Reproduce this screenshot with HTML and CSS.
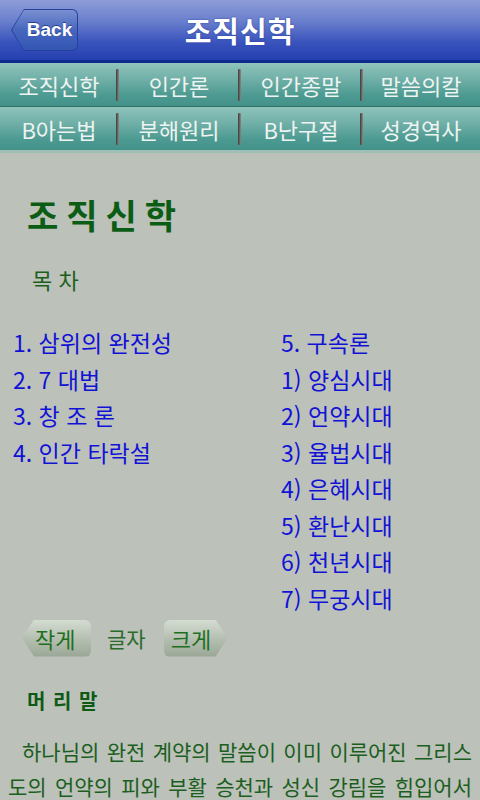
FILE: index.html
```html
<!DOCTYPE html>
<html lang="ko">
<head>
<meta charset="utf-8">
<link rel="stylesheet" href="styles.css">
</head>
<body>
<div class="header">
  <div class="back"><span>Back</span></div>
  <div class="htitle">조직신학</div>
</div>
<div class="tabs">
  <div class="tabrow">
    <div class="tab">조직신학</div>
    <div class="tab">인간론</div>
    <div class="tab">인간종말</div>
    <div class="tab">말씀의칼</div>
  </div>
  <div class="tabrow">
    <div class="tab">B아는법</div>
    <div class="tab">분해원리</div>
    <div class="tab">B난구절</div>
    <div class="tab">성경역사</div>
  </div>
</div>
<div class="content">
  <h1 class="title">조직신학</h1>
  <div class="toc-label">목 차</div>
  <div class="toc">
    <ul class="col left">
      <li>1. 삼위의 완전성</li>
      <li>2. 7 대법</li>
      <li>3. 창 조 론</li>
      <li>4. 인간 타락설</li>
    </ul>
    <ul class="col right">
      <li>5. 구속론</li>
      <li>1) 양심시대</li>
      <li>2) 언약시대</li>
      <li>3) 율법시대</li>
      <li>4) 은혜시대</li>
      <li>5) 환난시대</li>
      <li>6) 천년시대</li>
      <li>7) 무궁시대</li>
    </ul>
  </div>
  <div class="fontsize">
    <div class="fbtn small">작게</div>
    <div class="flabel">글자</div>
    <div class="fbtn big">크게</div>
  </div>
  <div class="section">머 리 말</div>
  <p class="para"><span class="l1">하나님의 완전 계약의 말씀이 이미 이루어진 그리스</span><span class="l2">도의 언약의 피와 부활 승천과 성신 강림을 힘입어서</span></p>
</div>
</body>
</html>
```
FILE: styles.css
```css
html, body {
  margin: 0;
  padding: 0;
}
body {
  width: 480px;
  height: 800px;
  overflow: hidden;
  background: #bcc1b9;
  font-family: "Noto Sans CJK KR", "Noto Sans", sans-serif;
}
.header {
  height: 60px;
  border-bottom: 3px solid #0d2a8c;
  background: linear-gradient(#8e9dd8 0%, #6a7fcd 35%, #3a54bd 70%, #2540b0 100%);
  display: flex;
  align-items: center;
  justify-content: center;
  position: relative;
}
.back {
  position: absolute;
  left: 11px;
  top: 9px;
  width: 67px;
  height: 42px;
  background: #24409a;
  clip-path: polygon(0 50%, 13px 0, 100% 0, 100% 100%, 13px 100%);
  border-radius: 0 6px 6px 0;
}
.back span {
  position: absolute;
  left: 1px;
  top: 1px;
  right: 1px;
  bottom: 1px;
  display: flex;
  align-items: center;
  justify-content: center;
  padding-left: 10px;
  box-sizing: border-box;
  background: linear-gradient(#7b90d2, #4766bd 50%, #3356b4);
  clip-path: polygon(0 50%, 12px 0, 100% 0, 100% 100%, 12px 100%);
  border-radius: 0 5px 5px 0;
  color: #fff;
  font-family: "Liberation Sans", Arial, sans-serif;
  font-weight: bold;
  font-size: 19px;
  text-shadow: 0 -1px 0 #26418f;
}
.htitle {
  color: #fff;
  font-weight: bold;
  font-size: 29px;
  letter-spacing: 1px;
  text-shadow: 0 0 2px #2a3f9a;
  line-height: 60px;
}
.tabs {
  background: #2f7a72;
}
.tabrow {
  display: grid;
  grid-template-columns: 118px 122px 122px 118px;
  height: 43px;
  border-bottom: 1px solid #2e6f68;
  background: linear-gradient(#8fc4bc 0%, #6eaea6 40%, #4c9a91 75%, #43928a 100%);
}
.tabrow + .tabrow {
  border-bottom: 3px solid #9fbfb6;
}
.tab {
  display: flex;
  align-items: center;
  justify-content: center;
  color: #eef4f2;
  font-size: 22px;
  position: relative;
}
.tab + .tab::before {
  content: "";
  position: absolute;
  left: -2px;
  top: 6px;
  width: 3px;
  height: 32px;
  background: linear-gradient(90deg, #3c3a38, #8d8a86);
  border-radius: 1px;
}
.title {
  margin: 41px 0 0 27px;
  font-size: 34px;
  line-height: 42px;
  letter-spacing: 8px;
  color: #0b5c14;
  font-weight: bold;
}
.toc-label {
  margin: 28px 0 0 32px;
  font-size: 22px;
  line-height: 30px;
  color: #1b5e1e;
  letter-spacing: 0;
}
.toc {
  display: grid;
  grid-template-columns: 268px 1fr;
  margin: 30px 0 0 13px;
}
.col {
  list-style: none;
  margin: 0;
  padding: 0;
}
.col li {
  font-size: 23px;
  line-height: 36.5px;
  color: #1212d6;
}
.fontsize {
  display: flex;
  align-items: center;
  margin: 3px 0 0 22px;
  height: 38px;
}
.fbtn {
  height: 37px;
  display: flex;
  align-items: center;
  font-size: 22px;
  color: #1f6f22;
  background: linear-gradient(#d4dcd1, #b2bdae 55%, #9aa797);
  border-radius: 6px;
}
.fbtn.small {
  width: 69px;
  padding-left: 13px;
  box-sizing: border-box;
  clip-path: polygon(0 50%, 12px 0, 100% 0, 100% 100%, 12px 100%);
}
.fbtn.big {
  width: 64px;
  padding-left: 7px;
  box-sizing: border-box;
  clip-path: polygon(0 0, 52px 0, 100% 50%, 52px 100%, 0 100%);
}
.flabel {
  margin: 0 18px 0 16px;
  font-size: 21px;
  color: #2b6a2d;
}
.section {
  margin: 29px 0 0 27px;
  font-size: 20px;
  line-height: 30px;
  color: #0f5a14;
  font-weight: bold;
  letter-spacing: 1px;
}
.para {
  margin: 18px 8px 0 8px;
  font-size: 21px;
  line-height: 35px;
  color: #1b5e1e;
}
.para span {
  display: block;
  text-align: justify;
  text-align-last: justify;
  white-space: nowrap;
}
.para .l1 {
  margin-left: 14px;
}
```
